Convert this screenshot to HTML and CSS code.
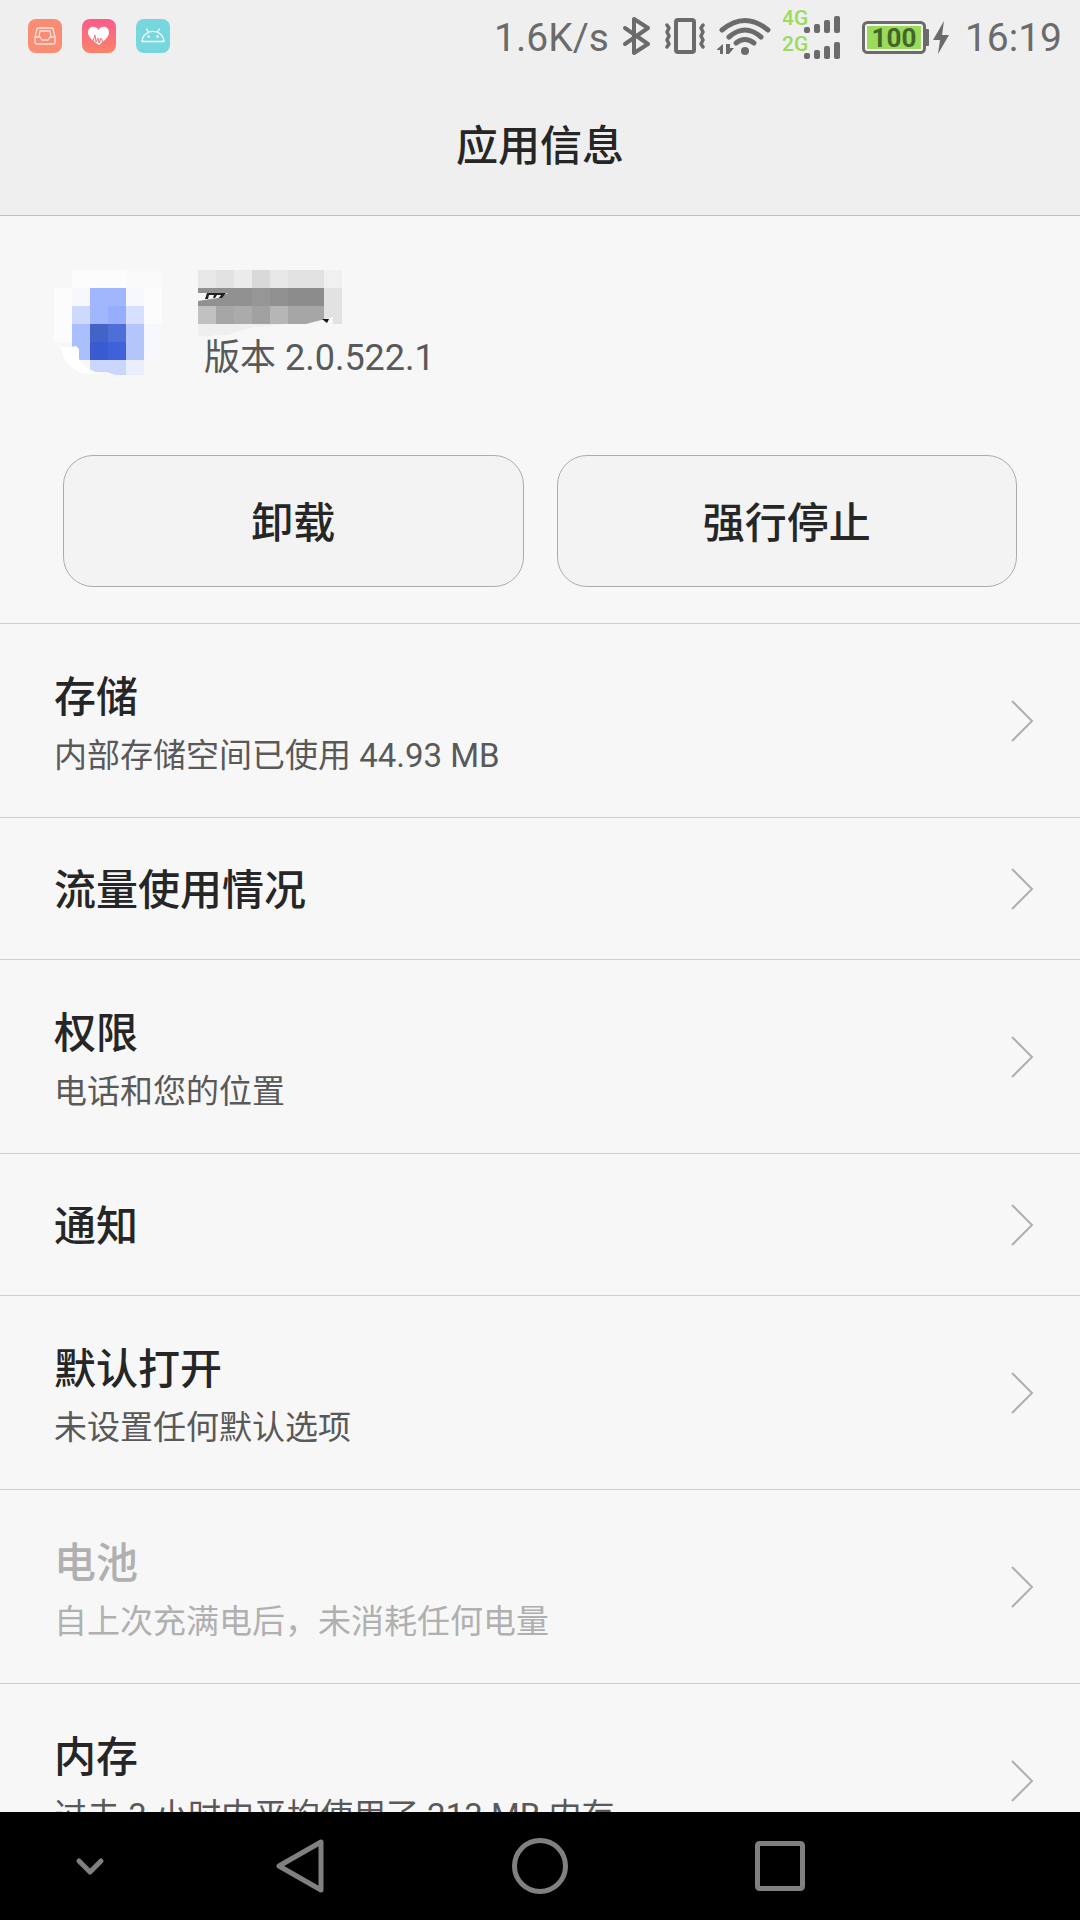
FILE: index.html
```html
<!DOCTYPE html>
<html lang="zh-CN">
<head>
    <meta charset="UTF-8">
    <meta name="viewport" content="width=device-width, initial-scale=1.0">
    <title>应用信息</title>
    <link rel="stylesheet" href="styles.css">
</head>
<body>
    <div class="status-bar">
        <div class="notifications">
            <svg class="badge" viewBox="0 0 34 34">
                <rect width="34" height="34" rx="8" fill="#fb8c74"/>
                <g fill="none" stroke="#ffe3dc" stroke-width="1.3" stroke-linejoin="round">
                    <path d="M10 9h14q1 0 1 1l2 8v5q0 2-2 2H9q-2 0-2-2v-5l2-8q0-1 1-1z"/>
                    <path d="M11 18l1-6h10l1 6M8 18h4l2 3h6l2-3h4"/>
                </g>
            </svg>
            <svg class="badge" viewBox="0 0 34 34">
                <defs>
                    <linearGradient id="health" x1="0" y1="0" x2="0" y2="1">
                        <stop offset="0" stop-color="#fb5a8b"/>
                        <stop offset="1" stop-color="#f98468"/>
                    </linearGradient>
                </defs>
                <rect width="34" height="34" rx="8" fill="url(#health)"/>
                <path d="M17 26C11 22 6 18 6 13.500C6 7 14 6 16.500 11C19 6 27 7 27 13.500C27 18 22 22 17 26z" fill="#fff"/>
                <path d="M9 22l2 0 2-6 1 7 2-4 1 5 2-5 2 4" fill="none" stroke="#fa7078" stroke-width="1"/>
            </svg>
            <svg class="badge" viewBox="0 0 34 34">
                <rect width="34" height="34" rx="8" fill="#76d7de"/>
                <path d="M6 22.500C7 9 27 9 28 22.500zM12.500 13l-2-3M21.500 13l2-3" fill="none" stroke="#fff" stroke-width="1.3" stroke-linecap="round" stroke-linejoin="round"/>
                <circle cx="12.500" cy="17.500" r="1.200" fill="#fff"/>
                <circle cx="21.500" cy="17.500" r="1.200" fill="#fff"/>
            </svg>
        </div>
        <div class="indicators">
            <span>1.6K/s</span>
            <svg width="32" height="72" viewBox="0 0 32 72">
                <path d="M4 28L27 44L13 53V19L27 28L4 44" fill="none" stroke="#6b6b6b" stroke-width="4" stroke-linecap="round" stroke-linejoin="round"/>
            </svg>
            <svg width="40" height="72" viewBox="0 0 40 72">
                <g fill="none" stroke="#6b6b6b" stroke-width="4" stroke-linejoin="round" stroke-linecap="round">
                    <rect x="11" y="20" width="18" height="32" rx="2"/>
                    <path d="M2 25l2 3-2 4 2 4-2 4 2 4-2 3M38 25l-2 3 2 4-2 4 2 4-2 4 2 3" stroke-width="3.500"/>
                </g>
            </svg>
            <svg width="54" height="72" viewBox="0 0 54 72">
                <g fill="none" stroke="#6b6b6b" stroke-width="5" stroke-linecap="round">
                    <path d="M5 30Q28 11 51 30"/>
                    <path d="M12 37Q28 23 44 37"/>
                    <path d="M19 43Q28 36 37 43"/>
                </g>
                <circle cx="28" cy="51" r="4" fill="#6b6b6b"/>
                <path d="M6 44v10H3v-4H-1zM9 44h4v4h4l-5 6H9z" fill="#6b6b6b"/>
            </svg>
            <svg width="64" height="72" viewBox="0 0 64 72">
                <g class="network">
                    <text x="-1" y="25">4G</text>
                    <text x="-1" y="51">2G</text>
                </g>
                <g fill="#6b6b6b">
                    <rect x="21" y="27" width="6" height="6" rx="2"/>
                    <rect x="31" y="24" width="6" height="9" rx="2"/>
                    <rect x="41" y="20" width="6" height="13" rx="2"/>
                    <rect x="51" y="16" width="6" height="17" rx="2"/>
                    <rect x="21" y="53" width="6" height="6" rx="2"/>
                    <rect x="31" y="50" width="6" height="9" rx="2"/>
                    <rect x="41" y="46" width="6" height="13" rx="2"/>
                    <rect x="51" y="42" width="6" height="17" rx="2"/>
                </g>
            </svg>
            <svg width="94" height="72" viewBox="0 0 94 72">
                <rect x="4.500" y="22.500" width="61" height="30" rx="4" fill="#f4f8f0" stroke="#6b6b6b" stroke-width="3"/>
                <rect x="8" y="26" width="54" height="23" fill="#9bdb5c"/>
                <rect x="66" y="29" width="4" height="17" rx="1" fill="#6b6b6b"/>
                <text class="charge" x="35" y="47" text-anchor="middle">100</text>
                <path d="M85 21L74 40h7L79 54L90 35h-7z" fill="#6b6b6b"/>
            </svg>
            <time>16:19</time>
        </div>
    </div>

    <header class="title-bar">
        <h1>应用信息</h1>
    </header>

    <main>
        <section class="app-info">
            <div class="app">
                <svg class="app-icon" viewBox="0 0 108 108" shape-rendering="crispEdges">
                    <path d="M18 0h54v18H18zM0 18h18v54H0zM90 18h18v36H90z" fill="#fcfcfc"/>
                    <path d="M72 0h36v18H72z" fill="#f9f9f9"/>
                    <path d="M18 18h18v18H18zM72 18h18v18H72zM90 54h18v36H90z" fill="#f6f8fd"/>
                    <path d="M36 18h36v18H36zM36 36h18v18H36z" fill="#a0b6fd"/>
                    <path d="M54 36h18v18H54z" fill="#96aefd"/>
                    <path d="M18 36h18v18H18z" fill="#cddafe"/>
                    <path d="M72 36h18v18H72z" fill="#d7e0fe"/>
                    <path d="M18 54h18v36H18z" fill="#aac0fd"/>
                    <path d="M36 54h18v18H36z" fill="#4463c8"/>
                    <path d="M54 54h18v18H54z" fill="#4e70d6"/>
                    <path d="M36 72h18v18H36z" fill="#395bcf"/>
                    <path d="M54 72h18v18H54z" fill="#3e62da"/>
                    <path d="M72 54h18v36H72z" fill="#b4c5fb"/>
                    <path d="M36 90h36v15H62L52 102H36z" fill="#cbd7fa"/>
                    <path d="M72 90h18v15H72z" fill="#e9eefa"/>
                    <path d="M7 77Q16 78 22 76L25 79V89Q32 99 42 102L50 102Q34 106 23 101Q9 93 7 77z" fill="#fff" shape-rendering="auto"/>
                </svg>
                <div>
                    <svg class="app-name" viewBox="0 0 144 66" shape-rendering="crispEdges">
                        <path d="M0 0h18v18H0zM72 0h18v18H72z" fill="#e7e7e7"/>
                        <path d="M18 0h18v18H18zM90 0h36v18H90zM126 18h18v36H126z" fill="#e2e2e2"/>
                        <path d="M36 0h18v18H36z" fill="#ebebeb"/>
                        <path d="M54 0h18v18H54z" fill="#d9d9d9"/>
                        <path d="M126 0h18v18H126z" fill="#f0f0f0"/>
                        <path d="M0 18h54v18H0zM72 18h18v18H72z" fill="#919191"/>
                        <path d="M54 18h18v18H54z" fill="#969696"/>
                        <path d="M90 18h36v18H90z" fill="#8c8c8c"/>
                        <path d="M0 36h18v18H0z" fill="#c1c1c1"/>
                        <path d="M18 36h18v18H18zM90 36h36v18H90z" fill="#a6a6a6"/>
                        <path d="M36 36h18v18H36z" fill="#ababab"/>
                        <path d="M54 36h18v18H54z" fill="#a1a1a1"/>
                        <path d="M72 36h18v18H72z" fill="#b6b6b6"/>
                        <path d="M0 54h90L50 58L30 65L0 66z" fill="#efefef"/>
                        <g shape-rendering="auto">
                            <path d="M0 23L30 23L20 28L0 31z" fill="#f7f7f7"/>
                            <path d="M108 54L135 47V54z" fill="#f7f7f7"/>
                            <path d="M9 23H28L24 28H21L23 25H19L17 28H15L16 25H11L10 29H7z" fill="#222"/>
                            <path d="M124 49h7l-2 4z" fill="#111"/>
                        </g>
                    </svg>
                    <p class="version">版本 2.0.522.1</p>
                </div>
            </div>
            <div class="actions">
                <button type="button">卸载</button>
                <button type="button">强行停止</button>
            </div>
        </section>

        <nav class="settings">
            <a class="row" href="#storage">
                <span class="label">
                    <span class="name">存储</span>
                    <span class="summary">内部存储空间已使用 44.93 MB</span>
                </span>
                <svg class="chevron" viewBox="0 0 24 44"><path d="M2 2l20 20L2 42"/></svg>
            </a>
            <a class="row" href="#data">
                <span class="label">
                    <span class="name">流量使用情况</span>
                </span>
                <svg class="chevron" viewBox="0 0 24 44"><path d="M2 2l20 20L2 42"/></svg>
            </a>
            <a class="row" href="#permissions">
                <span class="label">
                    <span class="name">权限</span>
                    <span class="summary">电话和您的位置</span>
                </span>
                <svg class="chevron" viewBox="0 0 24 44"><path d="M2 2l20 20L2 42"/></svg>
            </a>
            <a class="row" href="#notifications">
                <span class="label">
                    <span class="name">通知</span>
                </span>
                <svg class="chevron" viewBox="0 0 24 44"><path d="M2 2l20 20L2 42"/></svg>
            </a>
            <a class="row" href="#defaults">
                <span class="label">
                    <span class="name">默认打开</span>
                    <span class="summary">未设置任何默认选项</span>
                </span>
                <svg class="chevron" viewBox="0 0 24 44"><path d="M2 2l20 20L2 42"/></svg>
            </a>
            <a class="row disabled" href="#battery" aria-disabled="true">
                <span class="label">
                    <span class="name">电池</span>
                    <span class="summary">自上次充满电后，未消耗任何电量</span>
                </span>
                <svg class="chevron" viewBox="0 0 24 44"><path d="M2 2l20 20L2 42"/></svg>
            </a>
            <a class="row" href="#memory">
                <span class="label">
                    <span class="name">内存</span>
                    <span class="summary">过去 3 小时内平均使用了 213 MB 内存</span>
                </span>
                <svg class="chevron" viewBox="0 0 24 44"><path d="M2 2l20 20L2 42"/></svg>
            </a>
        </nav>
    </main>

    <footer class="nav-bar">
        <button type="button" aria-label="隐藏导航栏">
            <svg width="60" height="60" viewBox="0 0 60 60"><path d="M19 25l11 11 11-11" stroke-linecap="round"/></svg>
        </button>
        <button type="button" aria-label="返回">
            <svg width="60" height="60" viewBox="0 0 60 60"><path d="M51 6v48L9 30z"/></svg>
        </button>
        <button type="button" aria-label="主屏幕">
            <svg width="60" height="60" viewBox="0 0 60 60"><circle cx="30" cy="30" r="25.500"/></svg>
        </button>
        <button type="button" aria-label="最近任务">
            <svg width="60" height="60" viewBox="0 0 60 60"><rect x="7.500" y="7.500" width="45" height="45" rx="2"/></svg>
        </button>
    </footer>
</body>
</html>
```
FILE: styles.css
```css
* {
    margin: 0;
    padding: 0;
    box-sizing: border-box;
}

body {
    display: flex;
    flex-direction: column;
    height: 100vh;
    background-color: #f7f7f7;
    color: #262626;
    font-family: Roboto, "Noto Sans CJK SC", sans-serif;
}

svg {
    display: block;
    flex-shrink: 0;
}

button {
    font-family: inherit;
    cursor: pointer;
}

/* Status bar */
.status-bar {
    display: flex;
    justify-content: space-between;
    flex-shrink: 0;
    height: 72px;
    padding: 0 18px 0 28px;
    background-color: #efefef;
    color: #6b6b6b;
    font-size: 39px;
    line-height: 76px;
}

.notifications {
    display: flex;
    align-items: center;
    gap: 20px;
}

.badge {
    width: 34px;
    height: 34px;
}

.indicators {
    display: flex;
    gap: 12px;
}

.network {
    fill: #9bdb5c;
    font-size: 21px;
    font-weight: 500;
}

.charge {
    fill: #44652a;
    font-size: 26px;
    font-weight: 700;
}

/* Title */
.title-bar {
    display: flex;
    align-items: center;
    justify-content: center;
    flex-shrink: 0;
    height: 144px;
    padding-top: 6px;
    background-color: #efefef;
    border-bottom: 1px solid #c0c0c0;
}

.title-bar h1 {
    font-size: 42px;
    font-weight: 500;
    line-height: 60px;
}

main {
    flex: 1;
    min-height: 0;
    overflow: hidden;
}

/* App info */
.app-info {
    padding: 54px 54px 36px;
}

.app {
    display: flex;
    gap: 36px;
}

.app-icon {
    width: 108px;
    height: 108px;
}

.app-name {
    width: 144px;
    height: 66px;
}

.version {
    padding-left: 6px;
    color: #595959;
    font-size: 36px;
    line-height: 44px;
}

.actions {
    display: grid;
    grid-template-columns: 1fr 1fr;
    gap: 33px;
    margin-top: 75px;
    padding: 0 9px;
}

.actions button {
    height: 132px;
    padding-bottom: 4px;
    border: 1px solid #acacac;
    border-radius: 30px;
    background-color: #f3f3f3;
    color: #262626;
    font-size: 42px;
    font-weight: 500;
}

/* Settings list */
.row {
    display: flex;
    align-items: center;
    justify-content: space-between;
    min-height: 142px;
    padding: 0 46px 0 54px;
    border-top: 1px solid #cfcfcf;
    color: #262626;
    text-decoration: none;
}

.label {
    display: flex;
    flex-direction: column;
}

.name {
    padding-top: 5px;
    font-size: 42px;
    font-weight: 500;
    line-height: 60px;
}

.name:not(:last-child) {
    padding-top: 44px;
}

.summary {
    padding-bottom: 33px;
    color: #595959;
    font-size: 33px;
    line-height: 56px;
}

.disabled .name,
.disabled .summary {
    color: #b0b0b0;
}

.chevron {
    width: 24px;
    height: 44px;
    fill: none;
    stroke: #b0b0b0;
    stroke-width: 2;
}

/* Navigation bar */
.nav-bar {
    display: grid;
    grid-template-columns: 3fr 4fr 4fr 4fr 3fr;
    flex-shrink: 0;
    height: 108px;
    background-color: #000;
}

.nav-bar button {
    display: flex;
    align-items: center;
    justify-content: center;
    border: none;
    background: none;
}

.nav-bar svg {
    fill: none;
    stroke: #808080;
    stroke-width: 5;
    stroke-linejoin: round;
}
```
